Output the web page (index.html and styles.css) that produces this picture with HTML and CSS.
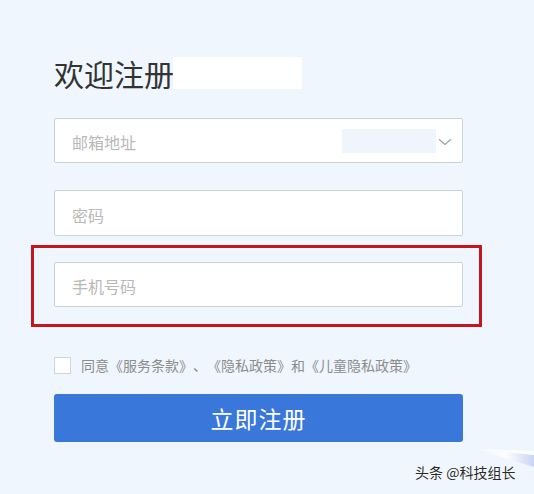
FILE: index.html
```html
<!DOCTYPE html>
<html lang="zh-CN">
<head>
<meta charset="utf-8">
<title>欢迎注册</title>
<link rel="stylesheet" href="styles.css">
</head>
<body>
<main class="form">
  <div class="title-row">
    <h1 class="title">欢迎注册</h1>
    <div class="title-mask"></div>
  </div>
  <div class="field select">
    <span class="ph">邮箱地址</span>
    <span class="mask"></span>
    <svg class="chev" width="14" height="8" viewBox="0 0 14 8"><path d="M1 1.2 L7 6.5 L13 1.2" fill="none" stroke="#9a9fa6" stroke-width="1.2"/></svg>
  </div>
  <div class="field pw"><span class="ph">密码</span></div>
  <div class="highlight">
    <div class="field"><span class="ph">手机号码</span></div>
  </div>
  <label class="agree">
    <span class="box"></span>
    <span class="agree-text">同意《服务条款》、《隐私政策》和《儿童隐私政策》</span>
  </label>
  <button class="submit">立即注册</button>
</main>
<svg class="streak" width="70" height="30" viewBox="0 0 70 30">
  <defs>
    <linearGradient id="g" x1="0" y1="0" x2="1" y2="0">
      <stop offset="0" stop-color="#ffffff" stop-opacity="0"/>
      <stop offset="0.5" stop-color="#ffffff" stop-opacity="0.9"/>
      <stop offset="1" stop-color="#c9d3f2"/>
    </linearGradient>
  </defs>
  <polygon points="12,6 70,12 70,24" fill="url(#g)"/>
  <polygon points="12,6 70,8 70,12" fill="#ffffff" opacity="0.8"/>
</svg>
<div class="watermark">头条 @科技组长</div>
</body>
</html>
```

FILE: styles.css
```css
html, body {
  margin: 0;
  padding: 0;
}
body {
  width: 534px;
  height: 494px;
  overflow: hidden;
  background: #eff6fd;
  font-family: "Noto Sans CJK SC", "Noto Sans", sans-serif;
  position: relative;
}
.form {
  width: 409px;
  padding: 57px 0 0 54px;
  display: flex;
  flex-direction: column;
}
.title-row {
  display: flex;
  align-items: center;
  height: 32px;
}
.title {
  margin: 0;
  font-size: 30px;
  line-height: 32px;
  font-weight: 400;
  color: #333333;
  width: 119px;
  white-space: nowrap;
}
.title-mask {
  width: 129px;
  height: 32px;
  background: #ffffff;
}
.field {
  box-sizing: border-box;
  height: 45px;
  background: #ffffff;
  border: 1px solid #cdd3da;
  border-radius: 2px;
  display: flex;
  align-items: center;
  padding-left: 17px;
}
.ph {
  font-size: 16px;
  color: #b8b8b8;
  line-height: 20px;
  margin-top: 3px;
}
.select {
  margin-top: 29px;
  padding-right: 10px;
}
.select .mask {
  margin-left: auto;
  width: 94px;
  height: 24px;
  background: #eef5fd;
}
.chev {
  margin-left: 2px;
  margin-top: 2px;
}
.pw {
  margin-top: 27px;
  height: 46px;
}
.highlight {
  margin: 9px -19px 0 -23px;
  padding: 14px 16px 17px 20px;
  border: 3px solid #c4161c;
}
.agree {
  margin-top: 30px;
  display: flex;
  align-items: center;
  gap: 10px;
  height: 17px;
}
.box {
  box-sizing: border-box;
  width: 17px;
  height: 17px;
  background: #ffffff;
  border: 1px solid #cfd5dc;
}
.agree-text {
  font-size: 14px;
  color: #8c8c8c;
  line-height: 17px;
  white-space: nowrap;
  text-spacing-trim: space-all;
  font-feature-settings: "fwid" 1;
}
.submit {
  margin-top: 20px;
  height: 48px;
  border: 0;
  border-radius: 3px;
  background: #3a77db;
  color: #ffffff;
  font-family: "Noto Sans CJK SC", "Noto Sans", sans-serif;
  font-size: 23px;
  letter-spacing: 1px;
  padding: 0;
}
.streak {
  position: absolute;
  right: 0;
  top: 443px;
}
.watermark {
  position: absolute;
  left: 415px;
  top: 463px;
  font-size: 14px;
  line-height: 18px;
  color: #2a2a2a;
  white-space: nowrap;
  text-shadow: 0 0 2px #ffffff, 0 0 1px #ffffff;
}
```
